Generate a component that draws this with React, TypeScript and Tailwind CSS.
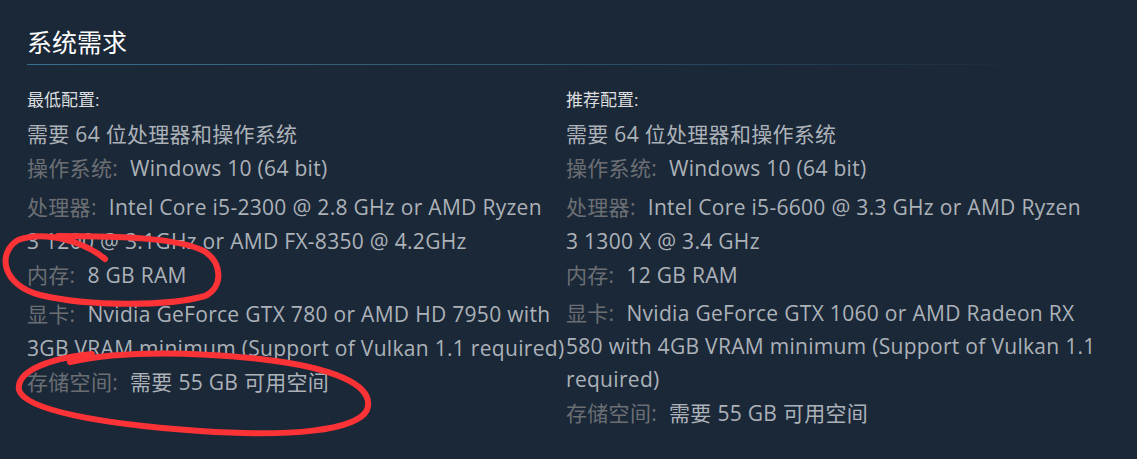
type Req = {
  label?: string;
  lines: string[];
  gap?: boolean;
  lead?: string;
};

const minReqs: Req[] = [
  { lines: ['需要 64 位处理器和操作系统'] },
  { label: '操作系统:', lines: ['Windows 10 (64 bit)'] },
  {
    label: '处理器:',
    lines: ['Intel Core i5-2300 @ 2.8 GHz or AMD Ryzen', '3 1200 @ 3.1GHz or AMD FX-8350 @ 4.2GHz'],
    gap: true,
  },
  { label: '内存:', lines: ['8 GB RAM'] },
  {
    label: '显卡:',
    lines: ['Nvidia GeForce GTX 780 or AMD HD 7950 with', '3GB VRAM minimum (Support of Vulkan 1.1 required)'],
    gap: true,
  },
  { label: '存储空间:', lines: ['需要 55 GB 可用空间'] },
];

const recReqs: Req[] = [
  { lines: ['需要 64 位处理器和操作系统'] },
  { label: '操作系统:', lines: ['Windows 10 (64 bit)'] },
  {
    label: '处理器:',
    lines: ['Intel Core i5-6600 @ 3.3 GHz or AMD Ryzen', '3 1300 X @ 3.4 GHz'],
    gap: true,
  },
  { label: '内存:', lines: ['12 GB RAM'] },
  {
    label: '显卡:',
    lines: ['Nvidia GeForce GTX 1060 or AMD Radeon RX', '580 with 4GB VRAM minimum (Support of Vulkan 1.1', 'required)'],
    gap: true,
    lead: 'leading-[33px]',
  },
  { label: '存储空间:', lines: ['需要 55 GB 可用空间'] },
];

function ReqColumn({ title, items }: { title: string; items: Req[] }) {
  return (
    <div className="w-[525px]">
      <div className="text-[17px] leading-[24px] text-[#dcdedf]">{title}</div>
      <ul className="mt-[5px]">
        {items.map((item, i) => (
          <li
            key={i}
            className={`whitespace-nowrap text-[21px] tracking-[0.3px] text-[#acb2b8] ${item.lead ?? 'leading-[34px]'} ${item.gap ? 'mt-[5px]' : ''}`}
          >
            {item.label && <span className="mr-[12px] text-[#6b6f74]">{item.label}</span>}
            {item.lines.map((line, j) => (
              <span key={j}>
                {j > 0 && <br />}
                {line}
              </span>
            ))}
          </li>
        ))}
      </ul>
    </div>
  );
}

export default function App() {
  return (
    <div
      className="relative h-[459px] w-[1137px] overflow-hidden bg-[#1b2838]"
      style={{ fontFamily: '"Open Sans", "Noto Sans CJK SC", sans-serif' }}
    >
      <div className="pl-[27px] pt-[26px]">
        <h2 className="text-[25px] leading-[32px] text-white">系统需求</h2>
        <div className="mt-[6px] h-px w-[1013px] bg-linear-to-r from-[#3b6e8c] via-[#2d5670] to-transparent" />
        <div className="mt-[23px] flex gap-[14px]">
          <ReqColumn title="最低配置:" items={minReqs} />
          <ReqColumn title="推荐配置:" items={recReqs} />
        </div>
      </div>

      {/* red hand-drawn marks */}
      <svg className="pointer-events-none absolute inset-0" width="1137" height="459" viewBox="0 0 1137 459" fill="none">
        <path
          d="M105 259 C85 242, 45 230, 18 240 C-2 252, 0 284, 40 295 C90 307, 170 306, 205 296 C224 287, 222 262, 204 251 C178 238, 122 236, 58 236"
          stroke="#fb3236"
          strokeWidth="6"
          strokeLinecap="round"
          strokeLinejoin="round"
        />
        <path
          d="M92 354 C52 358, 16 370, 19 390 C25 410, 100 424, 200 431 C290 437, 356 431, 367 410 C376 384, 330 367, 260 359 C190 352, 120 351, 70 362"
          stroke="#fb3236"
          strokeWidth="6"
          strokeLinecap="round"
          strokeLinejoin="round"
        />
      </svg>
    </div>
  );
}
